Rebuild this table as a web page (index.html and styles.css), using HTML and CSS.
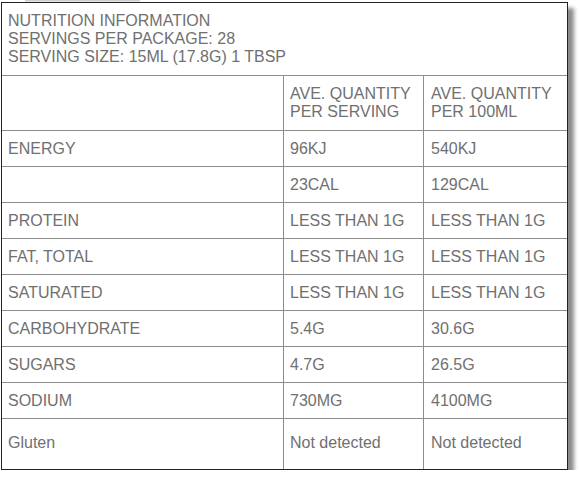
FILE: index.html
```html
<!DOCTYPE html>
<html>
<head>
<meta charset="utf-8">
<link rel="stylesheet" href="styles.css">
</head>
<body>
<div class="bleed"></div>
<div class="panel">
  <div class="info">
    <div>NUTRITION INFORMATION</div>
    <div>SERVINGS PER PACKAGE: 28</div>
    <div>SERVING SIZE: 15ML (17.8G) 1 TBSP</div>
  </div>
  <div class="row head">
    <div class="cell"></div>
    <div class="cell">AVE. QUANTITY<br>PER SERVING</div>
    <div class="cell">AVE. QUANTITY<br>PER 100ML</div>
  </div>
  <div class="row"><div class="cell">ENERGY</div><div class="cell">96KJ</div><div class="cell">540KJ</div></div>
  <div class="row"><div class="cell"></div><div class="cell">23CAL</div><div class="cell">129CAL</div></div>
  <div class="row"><div class="cell">PROTEIN</div><div class="cell">LESS THAN 1G</div><div class="cell">LESS THAN 1G</div></div>
  <div class="row"><div class="cell">FAT, TOTAL</div><div class="cell">LESS THAN 1G</div><div class="cell">LESS THAN 1G</div></div>
  <div class="row"><div class="cell">SATURATED</div><div class="cell">LESS THAN 1G</div><div class="cell">LESS THAN 1G</div></div>
  <div class="row"><div class="cell">CARBOHYDRATE</div><div class="cell">5.4G</div><div class="cell">30.6G</div></div>
  <div class="row"><div class="cell">SUGARS</div><div class="cell">4.7G</div><div class="cell">26.5G</div></div>
  <div class="row"><div class="cell">SODIUM</div><div class="cell">730MG</div><div class="cell">4100MG</div></div>
  <div class="row last"><div class="cell">Gluten</div><div class="cell">Not detected</div><div class="cell">Not detected</div></div>
</div>
</body>
</html>
```
FILE: styles.css
```css
html, body {
  margin: 0;
  padding: 0;
  background: #ffffff;
}
body {
  font-family: "Liberation Sans", Arial, sans-serif;
  font-size: 16px;
  line-height: 18px;
  color: #707070;
}
.bleed {
  margin-left: 25px;
  width: 115px;
  height: 2px;
  background: linear-gradient(to bottom, #c4c4c4, #eeeeee);
}
.panel {
  margin-left: 1px;
  width: 565px;
  border: 1px solid #222222;
  background: #ffffff;
  box-shadow: 6px 6px 4px #8c8c8c;
}
.info {
  padding: 9px 6px;
}
.row {
  display: grid;
  grid-template-columns: 281px 140px 142px;
  border-top: 1px solid #8e8e8e;
  height: 35px;
}
.row.head {
  height: 54px;
}
.row.last {
  height: 50px;
}
.cell {
  display: flex;
  align-items: center;
  padding: 0 6px;
}
.cell + .cell {
  border-left: 1px solid #8e8e8e;
}
.cell + .cell + .cell {
  padding-left: 7px;
}
.row.last .cell {
  align-items: flex-start;
  padding-top: 15px;
}
```
